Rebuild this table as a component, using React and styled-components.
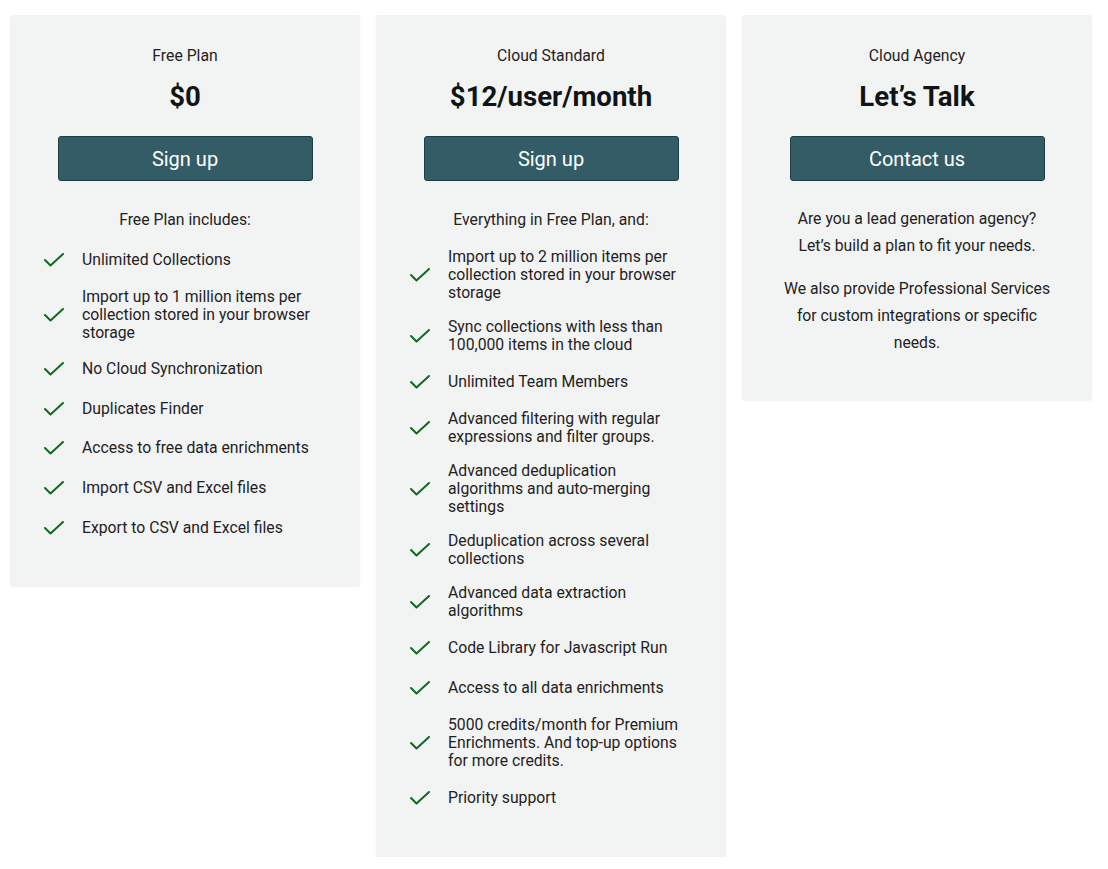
import React from "react";
import styled, { createGlobalStyle } from "styled-components";

const Global = createGlobalStyle`
  html, body { margin: 0; padding: 0; background: #ffffff; }
  body { font-family: Roboto, "Liberation Sans", Arial, sans-serif; color: #1f2222; }
`;

const Page = styled.div`
  display: flex;
  align-items: flex-start;
  gap: 16px;
  padding: 15px 0 0 10px;
`;

const Card = styled.section`
  width: 350px;
  box-sizing: border-box;
  background: #f2f3f3;
  border-radius: 3px;
  box-shadow: 0 1px 2px rgba(0, 0, 0, 0.06);
  padding: 30px 0 ${(p) => p.$pb || "47px"};
  display: flex;
  flex-direction: column;
  align-items: center;
`;

const PlanName = styled.div`
  font-size: 15.75px;
  line-height: 22px;
  color: #1f2222;
`;

const Price = styled.div`
  margin-top: 14px;
  font-size: 27.6px;
  line-height: 32px;
  font-weight: 700;
  color: #111414;
`;

const Button = styled.button`
  margin-top: 23px;
  width: 255px;
  height: 45px;
  box-sizing: border-box;
  background: #345c67;
  border: 1px solid #1d3d46;
  border-radius: 3px;
  color: #ffffff;
  font-family: Roboto, "Liberation Sans", Arial, sans-serif;
  font-size: 20px;
  font-weight: 400;
  cursor: pointer;
`;

const Includes = styled.div`
  margin-top: 28px;
  font-size: 15.75px;
  line-height: 22px;
`;

const List = styled.ul`
  list-style: none;
  margin: 17px 0 0;
  padding: 0 0 0 34px;
  width: 100%;
  box-sizing: border-box;
  display: flex;
  flex-direction: column;
  gap: ${(p) => p.$gap || "16px"};
`;

const Item = styled.li`
  display: flex;
  align-items: center;
  min-height: 24px;
`;

const IconBox = styled.span`
  flex: 0 0 38px;
  display: flex;
  align-items: center;
  height: 24px;
`;

const ItemText = styled.span`
  width: 236px;
  font-size: 15.75px;
  line-height: 18px;
  color: #1f2222;
`;

const Blurb = styled.p`
  margin: ${(p) => (p.$first ? "24px" : "16px")} 0 0;
  width: 276px;
  text-align: center;
  font-size: 15.75px;
  line-height: 27px;
  color: #1f2222;
`;

const Check = () => (
  <svg width="20" height="14" viewBox="0 0 20 14" fill="none">
    <polyline
      points="1,7 6.5,12.5 19,1"
      stroke="#11691f"
      strokeWidth="2"
      strokeLinecap="round"
      strokeLinejoin="round"
    />
  </svg>
);

const Feature = ({ children }) => (
  <Item>
    <IconBox>
      <Check />
    </IconBox>
    <ItemText>{children}</ItemText>
  </Item>
);

const freeFeatures = [
  "Unlimited Collections",
  "Import up to 1 million items per collection stored in your browser storage",
  "No Cloud Synchronization",
  "Duplicates Finder",
  "Access to free data enrichments",
  "Import CSV and Excel files",
  "Export to CSV and Excel files",
];

const cloudFeatures = [
  "Import up to 2 million items per collection stored in your browser storage",
  "Sync collections with less than 100,000 items in the cloud",
  "Unlimited Team Members",
  "Advanced filtering with regular expressions and filter groups.",
  "Advanced deduplication algorithms and auto-merging settings",
  "Deduplication across several collections",
  "Advanced data extraction algorithms",
  "Code Library for Javascript Run",
  "Access to all data enrichments",
  "5000 credits/month for Premium Enrichments. And top-up options for more credits.",
  "Priority support",
];

export default function App() {
  return (
    <>
      <Global />
      <Page>
        <Card $pb="46px">
          <PlanName>Free Plan</PlanName>
          <Price>$0</Price>
          <Button>Sign up</Button>
          <Includes>Free Plan includes:</Includes>
          <List $gap="15.6px">
            {freeFeatures.map((f) => (
              <Feature key={f}>{f}</Feature>
            ))}
          </List>
        </Card>
        <Card>
          <PlanName>Cloud Standard</PlanName>
          <Price>$12/user/month</Price>
          <Button>Sign up</Button>
          <Includes>Everything in Free Plan, and:</Includes>
          <List>
            {cloudFeatures.map((f) => (
              <Feature key={f}>{f}</Feature>
            ))}
          </List>
        </Card>
        <Card $pb="44px">
          <PlanName>Cloud Agency</PlanName>
          <Price>Let’s Talk</Price>
          <Button>Contact us</Button>
          <Blurb $first>
            Are you a lead generation agency?
            <br />
            Let’s build a plan to fit your needs.
          </Blurb>
          <Blurb>
            We also provide Professional Services for custom integrations or
            specific needs.
          </Blurb>
        </Card>
      </Page>
    </>
  );
}
